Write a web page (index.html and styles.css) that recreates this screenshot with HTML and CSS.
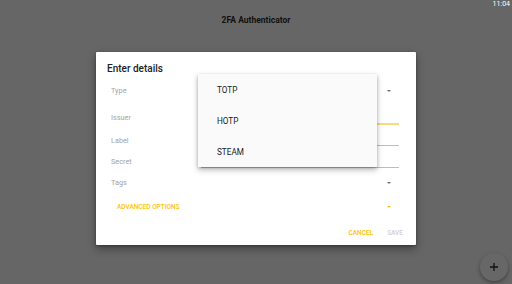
FILE: index.html
```html
<!DOCTYPE html>
<html>
<head>
<meta charset="utf-8">
<link rel="stylesheet" href="styles.css">
</head>
<body>
<div class="screen">
  <div class="statusbar">11:04</div>
  <div class="appbar">2FA Authenticator</div>

  <div class="dialog">
    <div class="dialog-title">Enter details</div>
    <div class="row row-spinner row-type">
      <div class="label">Type</div>
      <div class="spinner"><span class="arrow"></span></div>
    </div>
    <div class="row field field-issuer">
      <div class="label">Issuer</div>
      <div class="input input-focused"></div>
    </div>
    <div class="row field field-label">
      <div class="label">Label</div>
      <div class="input"></div>
    </div>
    <div class="row field field-secret">
      <div class="label">Secret</div>
      <div class="input"></div>
    </div>
    <div class="row row-spinner row-tags">
      <div class="label">Tags</div>
      <div class="spinner"><span class="arrow"></span></div>
    </div>
    <div class="row row-advanced">
      <div class="advanced-text">ADVANCED OPTIONS</div>
      <div class="spinner"><span class="arrow arrow-accent"></span></div>
    </div>
    <div class="actions">
      <span class="btn btn-cancel">CANCEL</span>
      <span class="btn btn-save">SAVE</span>
    </div>
  </div>

  <div class="menu">
    <div class="menu-item">TOTP</div>
    <div class="menu-item">HOTP</div>
    <div class="menu-item">STEAM</div>
  </div>

  <div class="fab">
    <svg width="10" height="10" viewBox="0 0 10 10"><path d="M5 1v8M1 5h8" stroke="#111" stroke-width="1.3" fill="none"/></svg>
  </div>
</div>
</body>
</html>
```

FILE: styles.css
```css
* { box-sizing: border-box; }
html, body {
  margin: 0;
  padding: 0;
}
body {
  width: 512px;
  height: 284px;
  overflow: hidden;
  background: #666666;
  font-family: Roboto, "Noto Sans", sans-serif;
}
.screen {
  position: relative;
  width: 512px;
  height: 284px;
}
.statusbar {
  height: 8px;
  line-height: 8px;
  font-size: 7px;
  color: #ffffff;
  text-align: right;
  padding-right: 2px;
}
.appbar {
  height: 24px;
  line-height: 24px;
  text-align: center;
  font-size: 8.5px;
  font-weight: 700;
  color: #111111;
}
.dialog {
  position: absolute;
  left: 96px;
  top: 52px;
  width: 320px;
  height: 193px;
  background: #ffffff;
  border-radius: 1px;
  box-shadow: 0 4px 10px rgba(0,0,0,0.35), 0 1px 3px rgba(0,0,0,0.3);
  padding: 10px 17px 0 15px;
  display: flex;
  flex-direction: column;
}
.dialog-title {
  height: 14px;
  line-height: 14px;
  font-size: 10px;
  font-weight: 500;
  color: #212121;
  margin-left: -4px;
}
.row {
  display: flex;
  flex: none;
}
.label {
  width: 90px;
  flex: none;
  font-size: 7.3px;
  line-height: 10px;
  color: #a3a3a3;
}
.row-spinner {
  height: 14px;
  align-items: center;
}
.row-type { margin-top: 8px; }
.row-tags { margin-top: 8px; }
.spinner {
  flex: 1;
  height: 100%;
  display: flex;
  align-items: center;
  justify-content: flex-end;
  padding-right: 8px;
}
.arrow {
  width: 0;
  height: 0;
  border-left: 2.5px solid transparent;
  border-right: 2.5px solid transparent;
  border-top: 2.5px solid #6f6f6f;
}
.arrow-accent { border-top-color: #ffc107; }
.field { align-items: stretch; }
.field .label { align-self: flex-end; }
.input {
  flex: 1;
  border-bottom: 1px solid #bdbdbd;
}
.input-focused { border-bottom: 2px solid #f8d97c; }
.field-issuer { height: 27px; }
.field-issuer .label { padding-bottom: 2.5px; }
.field-label { height: 21px; }
.field-label .label { padding-bottom: 0.5px; }
.field-secret { height: 22px; }
.field-secret .label { padding-bottom: 1.5px; }
.row-advanced {
  height: 14px;
  margin-top: 10px;
  align-items: center;
}
.advanced-text {
  padding-left: 6px;
  font-size: 6.5px;
  font-weight: 500;
  color: #ffc107;
  white-space: nowrap;
}
.actions {
  height: 14px;
  margin-top: 12px;
  margin-right: -4px;
  display: flex;
  align-items: center;
  justify-content: flex-end;
  gap: 14px;
}
.btn {
  font-size: 6.5px;
  font-weight: 500;
}
.btn-cancel { color: #ffc107; }
.btn-save { color: #d0d0d0; }
.menu {
  position: absolute;
  left: 198px;
  top: 74px;
  width: 179px;
  height: 93px;
  background: #fafafa;
  box-shadow: 0 3px 6px rgba(0,0,0,0.25), 0 1px 3px rgba(0,0,0,0.2);
  display: flex;
  flex-direction: column;
}
.menu-item {
  height: 31px;
  line-height: 32px;
  padding-left: 19px;
  font-size: 8.2px;
  color: #212121;
}
.fab {
  position: absolute;
  left: 480px;
  top: 253px;
  width: 28px;
  height: 28px;
  border-radius: 50%;
  background: #676767;
  box-shadow: 0 2px 4px rgba(0,0,0,0.35);
  display: flex;
  align-items: center;
  justify-content: center;
}
```
